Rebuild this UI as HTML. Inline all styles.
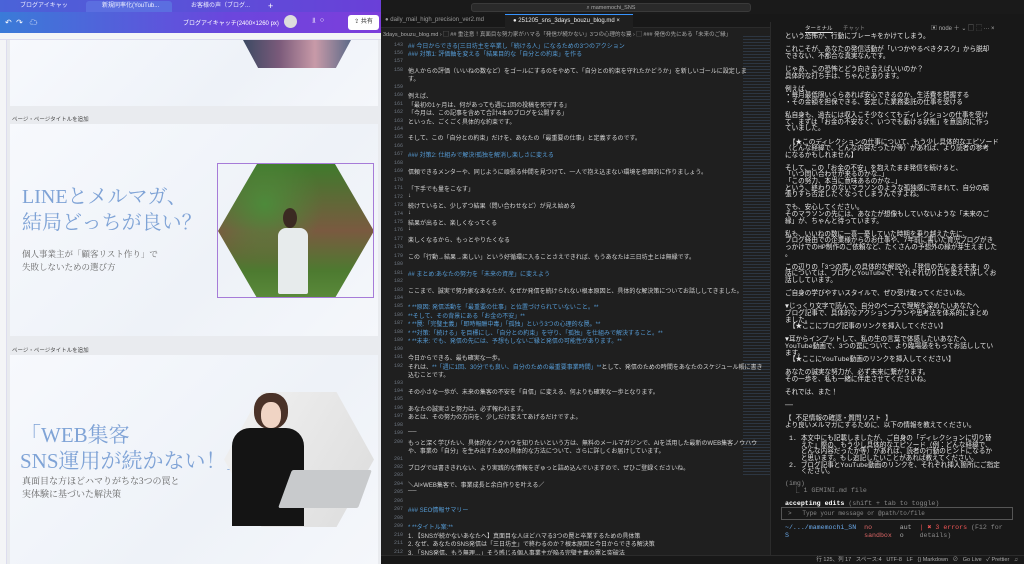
<!DOCTYPE html>
<html><head><meta charset="utf-8">
<style>
*{margin:0;padding:0;box-sizing:border-box}
html,body{width:1024px;height:564px;overflow:hidden}
body{background:#1e1e1e;font-family:"Liberation Sans","Noto Sans CJK JP",sans-serif;position:relative}
.abs{position:absolute}
.serif{font-family:"Liberation Serif","Noto Serif CJK SC",serif}
#left{left:0;top:0;width:381px;height:564px;background:#e9ebef;overflow:hidden}
.tabs{left:0;top:0;width:381px;height:12px;background:linear-gradient(90deg,#4a63d8,#6a3fd8);}
.tab{top:1px;height:11px;font-size:6px;color:#eef;line-height:11px;padding-left:16px}
.tool{left:0;top:12px;width:381px;height:21px;background:linear-gradient(90deg,#3a7bd8,#6b46dd 60%,#7d3edb)}
.ruler{left:0;top:33px;width:381px;height:7px;background:#f4f5f7;border-bottom:1px solid #dde}
.slide{background:linear-gradient(135deg,#f7f9fd,#eef2f8 60%,#f5f7fb)}
.lbl{font-size:5.5px;color:#444;left:12px}
#ed{left:381px;top:0;width:643px;height:564px;background:#1f1f1f;overflow:hidden}
.ln{position:absolute;left:0;width:22px;text-align:right;font-size:5px;color:#6e7681;font-family:"Liberation Mono",monospace}
.tx{position:absolute;left:27px;font-size:6px;color:#d4d4d4;white-space:nowrap}
.h{color:#569cd6}
.term{left:770px;top:22px;width:254px;height:533px;background:#181818;border-left:1px solid #2b2b2b;overflow:hidden}
.tt{position:absolute;left:14px;font-family:"Liberation Mono","Noto Sans CJK JP",monospace;font-size:6.6px;line-height:6.6px;color:#e8e8e8;white-space:pre}
</style></head><body>
<div id="left" class="abs">
 <div class="abs tabs"></div>
 <div class="abs tab" style="left:4px;width:80px">ブログアイキャッチ|C...</div>
 <div class="abs tab" style="left:86px;width:86px;background:#5b6ee0;border-radius:3px 3px 0 0">新規同率化(YouTub...</div>
 <div class="abs tab" style="left:175px;width:90px">お客様の声（ブログ...</div>
 <div class="abs tab" style="left:268px;color:#fff;font-size:9px;padding:0">+</div>
 <div class="abs tool"></div>
 <div class="abs" style="left:5px;top:17px;font-size:8px;color:#fff">↶ &nbsp;↷ &nbsp;&nbsp;☁</div>
 <div class="abs" style="left:183px;top:18px;font-size:6px;color:#fff">ブログアイキャッチ(2400×1260 px)</div>
 <div class="abs" style="left:284px;top:15px;width:13px;height:13px;border-radius:50%;background:#ddd"></div>
 <div class="abs" style="left:312px;top:17px;font-size:7px;color:#fff">⫫ &nbsp;○</div>
 <div class="abs" style="left:348px;top:15px;width:31px;height:15px;background:#fff;border-radius:3px;font-size:6px;line-height:15px;text-align:center;color:#333">⇪ 共有</div>
 <div class="abs ruler"></div>
 <div class="abs" style="left:0;top:40px;width:7px;height:524px;background:#f4f5f7;border-right:1px solid #dde"></div>
 <div class="abs slide" style="left:10px;top:40px;width:368px;height:66px"></div>
 <div class="abs" style="left:243px;top:40px;width:108px;height:28px;background:linear-gradient(90deg,#3c4a63,#7a5a7a,#c89aa8,#5c6a88);clip-path:polygon(0 0,100% 0,86% 100%,14% 100%)"></div>
 <div class="abs lbl" style="top:115px">ページ・ページタイトルを追加</div>
 <div class="abs slide" style="left:10px;top:124px;width:368px;height:212px"></div>
 <div class="abs serif" style="left:22px;top:184px;font-size:20px;color:#7fa3d6;line-height:26px;white-space:nowrap">LINEとメルマガ、<br>結局どっちが良い？</div>
 <div class="abs serif" style="left:22px;top:248px;font-size:8.5px;color:#666;line-height:13px">個人事業主が「顧客リスト作り」で<br>失敗しないための選び方</div>
 <div class="abs" style="left:218px;top:164px;width:156px;height:134px;clip-path:polygon(25% 0,75% 0,100% 50%,75% 100%,25% 100%,0 50%);background:radial-gradient(circle at 30% 30%,#4d8a3a,transparent 40%),linear-gradient(180deg,#3f7a2c,#7a5a40 50%,#4d7a30 80%,#5a8a3a)"></div>
 <div class="abs" style="left:283px;top:208px;width:14px;height:20px;border-radius:50%;background:#3b2a22"></div>
 <div class="abs" style="left:278px;top:228px;width:30px;height:66px;background:#e7ebec;border-radius:8px 8px 2px 2px"></div>
 <div class="abs" style="left:217px;top:163px;width:157px;height:135px;border:1px solid #a67bd8"></div>
 <div class="abs lbl" style="top:346px">ページ・ページタイトルを追加</div>
 <div class="abs slide" style="left:10px;top:355px;width:368px;height:209px"></div>
 <div class="abs serif" style="left:20px;top:422px;font-size:21px;color:#7fa3d6;line-height:26px;white-space:nowrap">「WEB集客<br>SNS運用が続かない！」</div>
 <div class="abs serif" style="left:22px;top:475px;font-size:9px;color:#666;line-height:13px">真面目な方ほどハマりがちな3つの罠と<br>実体験に基づいた解決策</div>
 <div class="abs" style="left:224px;top:392px;width:150px;height:135px;clip-path:polygon(25% 0,75% 0,100% 50%,75% 100%,25% 100%,0 50%);background:linear-gradient(120deg,#f2f2f2,#dcdcdc)"></div>
 <div class="abs" style="left:254px;top:393px;width:34px;height:36px;border-radius:45%;background:#4a3228"></div>
 <div class="abs" style="left:261px;top:402px;width:20px;height:26px;border-radius:45%;background:#f0d4c4"></div>
 <div class="abs" style="left:232px;top:428px;width:72px;height:98px;background:#141414;border-radius:18px 18px 0 0"></div>
 <div class="abs" style="left:285px;top:470px;width:80px;height:38px;background:#c8cacc;transform:skewX(-20deg);border-radius:2px"></div>
</div>

<div id="ed" class="abs">
 <div class="abs" style="left:0;top:0;width:643px;height:14px;background:#1a1a1a"></div>
 <div class="abs" style="left:90px;top:3px;width:280px;height:9px;background:#2a2a2a;border:1px solid #3a3a3a;border-radius:3px;font-size:5.5px;color:#aaa;text-align:center;line-height:8px">⌕ mamemochi_SNS</div>
 <div class="abs" style="left:0;top:14px;width:643px;height:14px;background:#181818;border-bottom:1px solid #2b2b2b"></div>
 <div class="abs" style="left:4px;top:17px;font-size:6px;color:#999">● daily_mail_high_precision_ver2.md</div>
 <div class="abs" style="left:124px;top:14px;width:128px;height:14px;background:#1f1f1f;border-top:1px solid #3794ff;font-size:6px;color:#eee;line-height:13px;padding-left:8px">● 251205_sns_3days_bouzu_blog.md ×</div>
 <div class="abs" style="left:2px;top:30px;font-size:5.5px;color:#aaa;white-space:nowrap">3days_bouzu_blog.md › ▢ ## 重注意！真面目な努力家がハマる「発信が続かない」3つの心理的な罠 › ▢ ### 発信の先にある「未来のご縁」</div>
 <div class="abs" style="left:362px;top:36px;width:28px;height:440px;background:repeating-linear-gradient(180deg,#2f3b4a 0 1px,#1f1f1f 1px 3px);opacity:.8"></div>
 <div id="lines"></div>
 <div class="abs" style="left:0;top:555px;width:643px;height:9px;background:#181818;border-top:1px solid #2b2b2b;font-size:5.5px;color:#aaa;line-height:8px;text-align:right;padding-right:6px">行 125、列 17 &nbsp; スペース:4 &nbsp; UTF-8 &nbsp; LF &nbsp; {} Markdown &nbsp; ⊘ &nbsp; Go Live &nbsp; ✓ Prettier &nbsp; ♫</div>
</div>

<div class="abs term">
 <div class="abs" style="left:34px;top:2px;font-size:5.5px;color:#ddd;border-bottom:1px solid #ddd">ターミナル</div>
 <div class="abs" style="left:72px;top:2px;font-size:5.5px;color:#888">チャット</div>
 <div class="abs" style="left:160px;top:1px;font-size:6px;color:#aaa">▣ node ＋ ⌄ ▢ ⬚ ··· ×</div>
<div class="tt" style="top:12px">という恐怖が、行動にブレーキをかけてしまう。

これこそが、あなたの発信活動が「いつかやるべきタスク」から脱却
できない、不都合な真実なんです。

じゃあ、この恐怖とどう向き合えばいいのか？
具体的な打ち手は、ちゃんとあります。

例えば、
・毎月最低限いくらあれば安心できるのか、生活費を把握する
・その金額を担保できる、安定した業務委託の仕事を受ける

私自身も、過去には収入こそ少なくてもディレクションの仕事を受け
て、まずは「お金の不安なく、いつでも動ける状態」を意図的に作っ
ていました。

 【★このディレクションの仕事について、もう少し具体的なエピソード
（どんな経緯で、どんな内容だったか等）があれば、より読者の参考
になるかもしれません】

そして、この「お金の不安」を抱えたまま発信を続けると、
「いつ問い合わせが来るのかな…」
「この努力、本当に意味あるのかな…」
という、終わりのないマラソンのような孤独感に苛まれて、自分の頑
張りすら否定したくなってしまうんですよね。

でも、安心してください。
そのマラソンの先には、あなたが想像もしていないような「未来のご
縁」が、ちゃんと待っています。

私も、いいねの数に一喜一憂していた時期を乗り越えた先に、
ブログ経由での企業様からのお仕事や、7年前に書いた育児ブログがき
っかけでのHP制作のご依頼など、たくさんの予想外の縁が芽生えました
。

この辺りの「3つの罠」の具体的な解説や、「発信の先にある未来」の
話については、ブログとYouTubeで、それぞれ切り口を変えて詳しくお
話ししています。

ご自身の学びやすいスタイルで、ぜひ受け取ってくださいね。

▼じっくり文字で読んで、自分のペースで理解を深めたいあなたへ
ブログ記事で、具体的なアクションプランや思考法を体系的にまとめ
ました。
 【★ここにブログ記事のリンクを挿入してください】

▼耳からインプットして、私の生の言葉で体感したいあなたへ
YouTube動画で、3つの罠について、より臨場感をもってお話ししてい
ます。
 【★ここにYouTube動画のリンクを挿入してください】

あなたの誠実な努力が、必ず未来に繋がります。
その一歩を、私も一緒に伴走させてくださいね。

それでは、また！

──

【 不足情報の確認・質問リスト 】
より良いメルマガにするために、以下の情報を教えてください。

 1. 本文中にも記載しましたが、ご自身の「ディレクションに切り替
    えた」際の、もう少し具体的なエピソード（例：どんな経緯で、
    どんな内容だったか等）があれば、読者の行動のヒントになるか
    と思います。もし追記したいことがあれば教えてください。
 2. ブログ記事とYouTube動画のリンクを、それぞれ挿入箇所にご指定
    ください。</div>
<div class="tt" style="top:458px;color:#888;line-height:7px">(img)
  ⎿ 1 GEMINI.md file</div>
<div class="tt" style="top:478px;line-height:7px"><span style="color:#fff;font-weight:bold">accepting edits</span><span style="color:#888"> (shift + tab to toggle)</span></div>
 <div class="abs" style="left:10px;top:485px;width:232px;height:13px;border:1px solid #555;font-family:'Liberation Mono',monospace;font-size:6px;color:#888;line-height:11px;padding-left:6px">&gt; &nbsp; Type your message or @path/to/file</div>
 <div class="tt" style="top:502px;line-height:8px;color:#6aa8e8">~/.../mamemochi_SN  <span style="color:#d66">no</span>       <span style="color:#aaa">aut</span>  <span style="color:#e55">| ✖ 3 errors</span><span style="color:#888"> (F12 for</span>
S                   <span style="color:#d66">sandbox</span>  <span style="color:#aaa">o</span>    <span style="color:#888">details)</span></div>
</div>

<script>
var L=[
["143","## 今日からできる[三日坊主を卒業し「続ける人」になるための3つのアクション",1],
["156","### 対策1: 評価軸を変える「結果目的な「自分との約束」を作る",1],
["157",""],
["158","他人からの評価（いいねの数など）をゴールにするのをやめて、「自分との約束を守れたかどうか」を新しいゴールに設定しま"],
["","す。"],
["159",""],
["160","例えば、"],
["161","「最初の1ヶ月は、何があっても週に1回の投稿を死守する」"],
["162","「今月は、この記事を含めて合計4本のブログを公開する」"],
["163","といった、ごくごく具体的な約束です。"],
["164",""],
["165","そして、この「自分との約束」だけを、あなたの「最重要の仕事」と定義するのです。"],
["166",""],
["167","### 対策2: 仕組みで解決!孤独を解消し楽しさに変える",1],
["168",""],
["169","信頼できるメンターや、同じように頑張る仲間を見つけて、一人で抱え込まない環境を意図的に作りましょう。"],
["170",""],
["171","「下手でも量をこなす」"],
["172","↓"],
["173","続けていると、少しずつ結果（問い合わせなど）が見え始める"],
["174","↓"],
["175","結果が出ると、楽しくなってくる"],
["176","↓"],
["177","楽しくなるから、もっとやりたくなる"],
["178",""],
["179","この「行動→結果→楽しい」という好循環に入ることさえできれば、もうあなたは三日坊主とは無縁です。"],
["180",""],
["181","## まとめ:あなたの努力を「未来の資産」に変えよう",1],
["182",""],
["183","ここまで、誠実で努力家なあなたが、なぜか発信を続けられない根本原因と、具体的な解決策についてお話ししてきました。"],
["184",""],
["185","*    **原因: 発信活動を「最重要の仕事」と位置づけられていないこと。**",1],
["186","     **そして、その背景にある「お金の不安」**",1],
["187","*    **罠:「完璧主義」「即時報酬中毒」「孤独」という3つの心理的な罠。**",1],
["188","*    **対策:「続ける」を目標にし、「自分との約束」を守り、「孤独」を仕組みで解決すること。**",1],
["189","*    **未来: でも、発信の先には、予想もしないご縁と発信の可能性があります。**",1],
["190",""],
["191","今日からできる、最も確実な一歩。"],
["192","それは、<span class=h>**「週に1回、30分でも良い、自分のための最重要事業時間」**</span>として、発信のための時間をあなたのスケジュール帳に書き"],
["","込むことです。"],
["193",""],
["194","その小さな一歩が、未来の集客の不安を「自信」に変える、何よりも確実な一歩となります。"],
["195",""],
["196","あなたの誠実さと努力は、必ず報われます。"],
["197","あとは、その努力の方向を、少しだけ変えてあげるだけですよ。"],
["198",""],
["199","──"],
["200","もっと深く学びたい、具体的なノウハウを知りたいという方は、無料のメールマガジンで、AIを活用した最新のWEB集客ノウハウ"],
["","や、事業の「自分」を生み出すための具体的な方法について、さらに詳しくお届けしています。"],
["201",""],
["202","ブログでは書ききれない、より実践的な情報をぎゅっと詰め込んでいますので、ぜひご登録くださいね。"],
["203",""],
["204","＼AI×WEB集客で、事業成長と余白作りを叶える／"],
["205","──"],
["206",""],
["207","### SEO情報サマリー",1],
["208",""],
["209","*    **タイトル案:**",1],
["210","     1.   【SNSが続かないあなたへ】真面目な人ほどハマる3つの罠と卒業するための具体策"],
["211","     2.   なぜ、あなたのSNS発信は「三日坊主」で終わるのか？根本原因と今日からできる解決策"],
["212","     3.   「SNS発信、もう無理…」そう感じる個人事業主が陥る完璧主義の罠と突破法"]
];
var h="",y=40.5;
for(var i=0;i<L.length;i++){var t=L[i];
h+='<div class="ln" style="top:'+(y+1)+'px">'+t[0]+'</div><div class="tx'+(t[2]?' h':'')+'" style="top:'+y+'px">'+t[1]+'</div>';y+=8.45;}
document.getElementById('lines').innerHTML=h;
</script>
</body></html>
